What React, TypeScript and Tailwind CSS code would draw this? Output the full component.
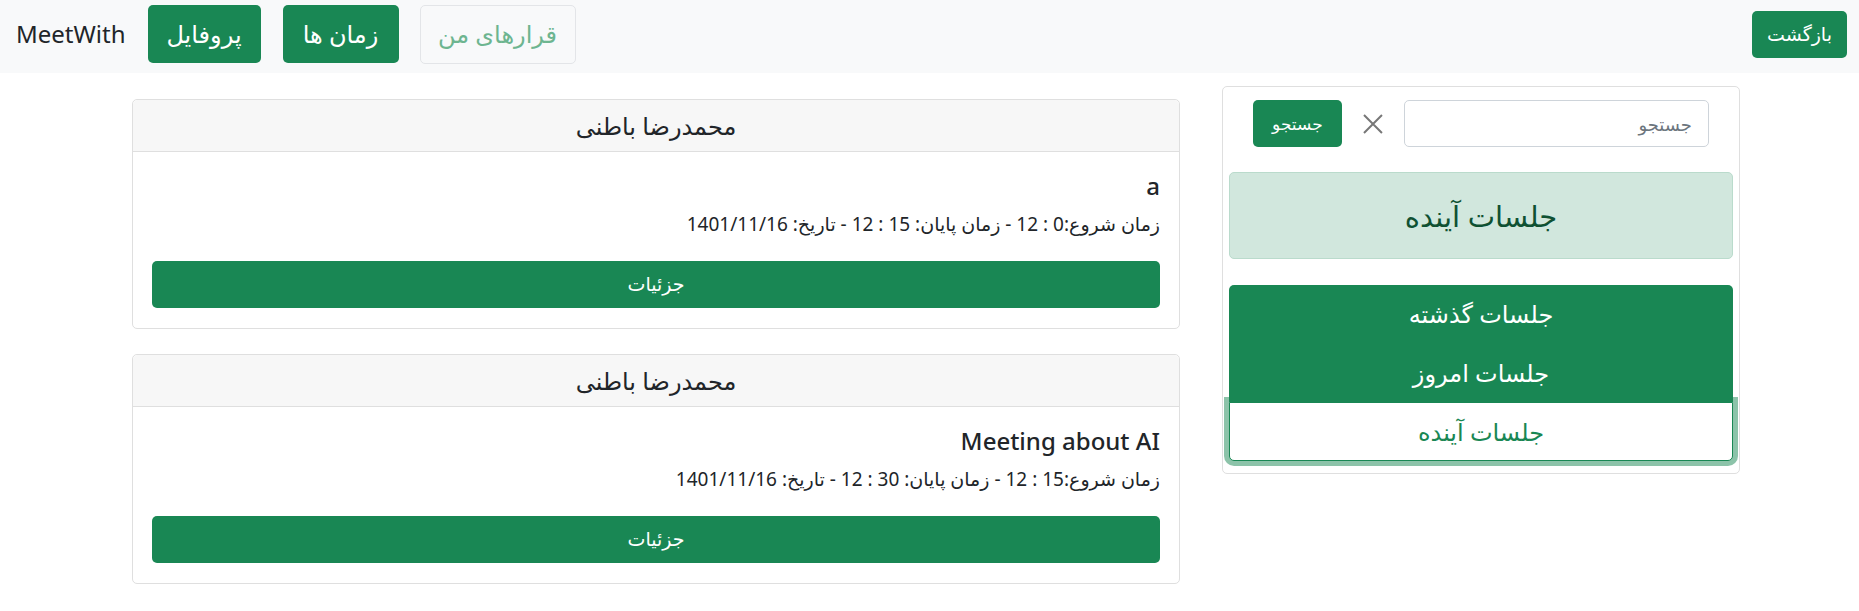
import React from "react";

const meetings = [
  {
    owner: "محمدرضا باطنی",
    title: "a",
    info: "زمان شروع:0 : 12 - زمان پایان: 15 : 12 - تاریخ: 1401/11/16",
  },
  {
    owner: "محمدرضا باطنی",
    title: "Meeting about AI",
    info: "زمان شروع:15 : 12 - زمان پایان: 30 : 12 - تاریخ: 1401/11/16",
  },
];

function MeetingCard({ owner, title, info }: { owner: string; title: string; info: string }) {
  return (
    <div dir="rtl" className="rounded-[5px] border border-[#dfdfdf] bg-white">
      <div className="flex h-[52px] items-center justify-center rounded-t-[5px] border-b border-[#dfdfdf] bg-[#f7f7f7] text-[24px] text-[#212529]">
        {owner}
      </div>
      <div className="px-[19px] pt-[19px] pb-[20px]">
        <h5 className="text-[24px] font-medium leading-[29px] text-[#212529]">{title}</h5>
        <p className="mt-[10px] text-[19px] leading-[29px] text-[#212529]">{info}</p>
        <button className="mt-[22px] flex h-[47px] w-full items-center justify-center rounded-[5px] bg-[#198754] text-[19px] text-white">
          جزئیات
        </button>
      </div>
    </div>
  );
}

export default function App() {
  return (
    <div className="min-h-[611px] bg-white font-['Noto_Sans','DejaVu_Sans',sans-serif] text-[#212529]">
      <nav className="flex h-[73px] items-center bg-[#f8f9fa] pb-[5px] pl-[16px] pr-[12px]">
        <span className="mr-[22px] text-[24px] leading-none">MeetWith</span>
        <button className="mr-[22px] flex h-[58px] w-[113px] items-center justify-center rounded-[5px] bg-[#198754] text-[24px] text-white">
          پروفایل
        </button>
        <button className="mr-[21px] flex h-[58px] w-[116px] items-center justify-center rounded-[5px] bg-[#198754] text-[24px] text-white">
          زمان ها
        </button>
        <button className="flex h-[59px] w-[156px] items-center justify-center rounded-[5px] border border-[#e3e5e8] text-[24px] text-[#6db590]">
          قرارهای من
        </button>
        <button className="ml-auto flex h-[47px] w-[95px] items-center justify-center rounded-[5px] bg-[#198754] text-[19px] text-white">
          بازگشت
        </button>
      </nav>

      <div className="flex items-start gap-[42px] pl-[132px]">
        <div className="mt-[26px] flex w-[1048px] flex-col gap-[25px]">
          {meetings.map((m, i) => (
            <MeetingCard key={i} {...m} />
          ))}
        </div>

        <div dir="rtl" className="mt-[13px] w-[518px] rounded-[5px] border border-[#dfdfdf] px-[6px] pt-[13px] pb-[12px]">
          <div className="mx-[24px] flex items-center gap-[21px]">
            <input
              placeholder="جستجو"
              className="h-[47px] w-[306px] rounded-[5px] border border-[#ced4da] px-[16px] text-[18px] placeholder:text-[#6c757d] focus:outline-none"
            />
            <svg viewBox="0 0 20 20" className="h-[20px] w-[20px]" fill="none" stroke="#777" strokeWidth="2">
              <path d="M1 1 L19 19 M19 1 L1 19" />
            </svg>
            <button className="flex h-[47px] w-[89px] items-center justify-center rounded-[5px] bg-[#198754] text-[17px] font-medium text-white">
              جستجو
            </button>
          </div>

          <div className="mt-[25px] flex h-[87px] items-center justify-center rounded-[5px] border border-[#badbcc] bg-[#d1e7dd] text-[29px] text-[#0f5132]">
            جلسات آینده
          </div>

          <div className="mt-[26px] flex flex-col text-[24px]">
            <div className="flex h-[58px] items-center justify-center rounded-t-[5px] bg-[#198754] text-white">
              جلسات گذشته
            </div>
            <div className="flex h-[59px] items-center justify-center bg-[#198754] text-white">
              جلسات امروز
            </div>
            <div className="flex h-[59px] items-center justify-center rounded-b-[5px] border border-[#198754] bg-white text-[#198754] shadow-[0_0_0_5px_rgba(25,135,84,0.5)]">
              جلسات آینده
            </div>
          </div>
        </div>
      </div>
    </div>
  );
}
